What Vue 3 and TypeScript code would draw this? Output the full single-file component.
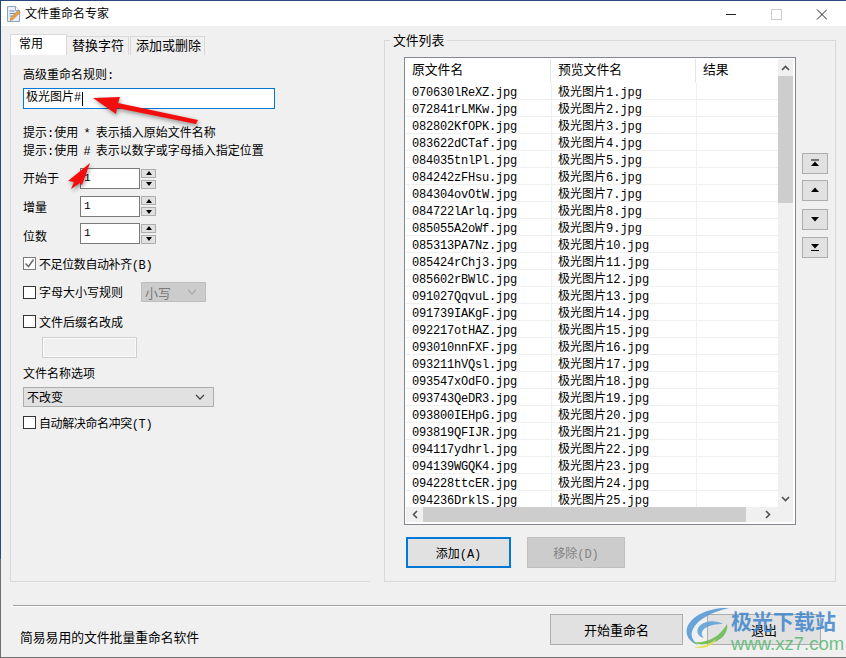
<script setup lang="ts">
const names: string[] = [
  '070630lReXZ', '072841rLMKw', '082802KfOPK', '083622dCTaf', '084035tnlPl',
  '084242zFHsu', '084304ovOtW', '084722lArlq', '085055A2oWf', '085313PA7Nz',
  '085424rChj3', '085602rBWlC', '091027QqvuL', '091739IAKgF', '092217otHAZ',
  '093010nnFXF', '093211hVQsl', '093547xOdFO', '093743QeDR3', '093800IEHpG',
  '093819QFIJR', '094117ydhrl', '094139WGQK4', '094228ttcER', '094236DrklS'
]
const rows = names.map((n, i) => ({ name: `${n}.jpg`, preview: `极光图片${i + 1}.jpg` }))
const spins: string[] = ['开始于', '增量', '位数']
</script>

<template>
  <div class="window">
    <header class="titlebar">
      <svg class="appicon" width="16" height="18" viewBox="0 0 16 18">
        <path d="M1.5 1.5h8l4 4v11h-12z" fill="#e8eef8" stroke="#8ea3c4" />
        <path d="M9.5 1.5v4h4" fill="#fff" stroke="#8ea3c4" />
        <path d="M3.5 6h5M3.5 8.5h8M3.5 11h6" stroke="#6d8cc0" />
        <path d="M4 15.5l1-3 7-7 2 2-7 7z" fill="#e8a33d" stroke="#b8772a" stroke-width=".6" />
      </svg>
      <span class="title">文件重命名专家</span>
      <div class="controls">
        <svg width="120" height="14" viewBox="0 0 120 14">
          <path d="M19 7.5h10" stroke="#222" />
          <rect x="64.5" y="2.5" width="10" height="10" fill="none" stroke="#ccc" />
          <path d="M110 2.5l10 10M120 2.5l-10 10" stroke="#222" />
        </svg>
      </div>
    </header>

    <main class="main">
      <section class="left">
        <div class="tabs">
          <div class="tab active">常用</div>
          <div class="tab">替换字符</div>
          <div class="tab">添加或删除</div>
        </div>
        <div class="pane">
          <div class="label rule-label">高级重命名规则:</div>
          <div class="rule-input">极光图片#<i class="caret"></i></div>
          <div class="hints">
            <div>提示:使用 * 表示插入原始文件名称</div>
            <div>提示:使用 # 表示以数字或字母插入指定位置</div>
          </div>
          <div class="spins">
            <div v-for="s in spins" :key="s" class="spin-row">
              <span class="spin-label">{{ s }}</span>
              <div class="num">1</div>
              <div class="spinner">
                <span class="sbtn"><i class="tri up"></i></span>
                <span class="sbtn"><i class="tri down"></i></span>
              </div>
            </div>
          </div>
          <div class="check first">
            <span class="box checked">
              <svg width="11" height="11" viewBox="0 0 11 11"><path d="M1.5 5.5l3 3 5-7" fill="none" stroke="#6b6b6b" stroke-width="1.5" /></svg>
            </span>
            <span>不足位数自动补齐(B)</span>
          </div>
          <div class="case-row">
            <div class="check">
              <span class="box"></span>
              <span>字母大小写规则</span>
            </div>
            <div class="select disabled">
              <span>小写</span>
              <svg width="10" height="6" viewBox="0 0 10 6"><path d="M1 1l4 4 4-4" fill="none" stroke="#a8a8a8" stroke-width="1.2" /></svg>
            </div>
          </div>
          <div class="check third">
            <span class="box"></span>
            <span>文件后缀名改成</span>
          </div>
          <div class="ext-input"></div>
          <div class="label name-label">文件名称选项</div>
          <div class="select wide">
            <span>不改变</span>
            <svg width="10" height="6" viewBox="0 0 10 6"><path d="M1 1l4 4 4-4" fill="none" stroke="#444" stroke-width="1.3" /></svg>
          </div>
          <div class="check last">
            <span class="box"></span>
            <span>自动解决命名冲突(T)</span>
          </div>
        </div>
      </section>

      <section class="group">
        <div class="legend">文件列表</div>
        <div class="group-body">
          <div class="list-col">
            <div class="list">
              <div class="list-top">
                <div class="table">
                  <div class="thead">
                    <div class="th c1">原文件名</div>
                    <div class="th c2">预览文件名</div>
                    <div class="th c3">结果</div>
                  </div>
                  <div v-for="r in rows" :key="r.name" class="tr">
                    <div class="td d1">{{ r.name }}</div>
                    <div class="td d2">{{ r.preview }}</div>
                    <div class="td d3"></div>
                  </div>
                </div>
                <div class="vscroll">
                  <div class="arrow">
                    <svg width="9" height="6" viewBox="0 0 9 6"><path d="M1 5l3.5-3.5L8 5" fill="none" stroke="#505050" stroke-width="1.6" /></svg>
                  </div>
                  <div class="vthumb"></div>
                  <div class="vfill"></div>
                  <div class="arrow">
                    <svg width="9" height="6" viewBox="0 0 9 6"><path d="M1 1l3.5 3.5L8 1" fill="none" stroke="#505050" stroke-width="1.6" /></svg>
                  </div>
                </div>
              </div>
              <div class="hscroll">
                <div class="harrow">
                  <svg width="6" height="9" viewBox="0 0 6 9"><path d="M5 1L1.5 4.5 5 8" fill="none" stroke="#505050" stroke-width="1.6" /></svg>
                </div>
                <div class="hthumb"></div>
                <div class="harrow right">
                  <svg width="6" height="9" viewBox="0 0 6 9"><path d="M1 1l3.5 3.5L1 8" fill="none" stroke="#505050" stroke-width="1.6" /></svg>
                </div>
              </div>
            </div>
            <div class="list-actions">
              <button class="btn add">添加(A)</button>
              <button class="btn remove">移除(D)</button>
            </div>
          </div>
          <div class="side">
            <div class="sidebtn">
              <svg width="24" height="19" viewBox="0 0 24 19"><path d="M8 6h8" stroke="#000" /><path d="M12 7.5l4 4.5H8z" /></svg>
            </div>
            <div class="sidebtn b2">
              <svg width="24" height="19" viewBox="0 0 24 19"><path d="M12 6.5l4 4.5H8z" /></svg>
            </div>
            <div class="sidebtn b3">
              <svg width="24" height="19" viewBox="0 0 24 19"><path d="M8 7h8l-4 4.5z" /></svg>
            </div>
            <div class="sidebtn b4">
              <svg width="24" height="19" viewBox="0 0 24 19"><path d="M8 6h8l-4 4.5z" /><path d="M8 12.5h8" stroke="#000" /></svg>
            </div>
          </div>
        </div>
      </section>
    </main>

    <div class="sep"></div>
    <footer class="footer">
      <div class="status">简易易用的文件批量重命名软件</div>
      <button class="btn start">开始重命名</button>
      <button class="btn exit">退出</button>
    </footer>

    <svg class="arrows" width="220" height="110" viewBox="0 0 220 110">
      <path d="M93 14l27-1-2 6 80 17-2 4-79-16-1 6z" fill="#f40d0d" />
      <path d="M90 79L68 97l6 1-3 7 9-6 2 2z" fill="#f40d0d" />
    </svg>

    <div class="watermark">
      <svg class="wm-logo" width="46" height="42" viewBox="0 0 46 42">
        <path d="M44 1C26 0 6 8 2 21c-2 8 3 14 11 17-6-5-8-10-5-16C12 13 26 5 44 1z" fill="#4f94d4" opacity=".85" />
        <path d="M38 17c-9-5-21-3-25 4-2 5 1 9 6 10-3-3-3-6 0-9 5-4 12-5 19-5z" fill="#5a9fd8" opacity=".85" />
        <path d="M42 17c2 10-8 19-21 20-5 1-10 0-14-2 9 1 17-1 23-5 5-3 9-8 12-13z" fill="#6dbb57" opacity=".9" />
        <path d="M31 32c-6 5-14 8-22 8 3 1 5 1 8 1 7-1 12-4 14-9z" fill="#e8dd55" opacity=".9" />
      </svg>
      <div class="wm-text">
        <div class="wm-cn">极光下载站</div>
        <div class="wm-en">www.xz7.com</div>
      </div>
    </div>
  </div>
</template>

<style>
html, body { margin: 0; padding: 0; background: #f0f0f0; }
</style>

<style scoped>
.window {
  position: relative;
  width: 846px;
  height: 658px;
  box-sizing: border-box;
  padding-left: 1px;
  border-top: 1px solid #2b4a7a;
  border-bottom: 1px solid #6f6f6f;
  background: linear-gradient(#2b4a7a 0, #2b4a7a 85%, #6f6f6f 85%) left top / 1px 100% no-repeat, #f0f0f0;
  display: flex;
  flex-direction: column;
  font-family: "Liberation Mono", "Noto Sans CJK SC", monospace;
  font-size: 12px;
  color: #000;
  overflow: hidden;
}
.titlebar {
  height: 25px;
  flex: none;
  background: #fff;
  display: flex;
  align-items: center;
  padding-left: 5px;
}
.appicon { flex: none; }
.title { margin: -2px 0 0 3px; font-size: 12px; }
.controls { margin-left: auto; padding-right: 19px; display: flex; }
.main { display: flex; flex: none; height: 556px; }
.left { margin: 8px 0 0 9px; width: 360px; height: 548px; display: flex; flex-direction: column; }
.tabs { display: flex; height: 21px; flex: none; align-items: flex-end; }
.tab {
  box-sizing: border-box;
  height: 19px;
  padding: 0 5px;
  border: 1px solid #d9d9d9;
  border-bottom: 0;
  border-left: 0;
  line-height: 20px;
  font-size: 13px;
  white-space: nowrap;
}
.tab:nth-child(2) { width: 62px; text-align: center; }
.tab:nth-child(3) { width: 75px; margin-left: 1px; border-left: 1px solid #d9d9d9; text-align: center; }
.tab.active {
  width: 57px;
  height: 21px;
  padding-left: 8px;
  background: #fff;
  border-left: 1px solid #d9d9d9;
  line-height: 21px;
  font-size: 12px;
}
.pane {
  flex: 1;
  box-sizing: border-box;
  border-left: 1px solid #d9d9d9;
  border-bottom: 1px solid #d9d9d9;
  padding: 12px 0 0 12px;
  display: flex;
  flex-direction: column;
  align-items: flex-start;
}
.label { height: 16px; line-height: 19px; white-space: nowrap; }
.rule-input {
  box-sizing: border-box;
  width: 252px;
  height: 21px;
  margin-top: 5px;
  padding-left: 2px;
  border: 1px solid #0078d7;
  background: #fff;
  line-height: 19px;
  display: flex;
  align-items: center;
}
.caret { width: 1px; height: 14px; background: #000; margin-left: 1px; }
.hints { margin-top: 16px; line-height: 18px; white-space: pre; word-spacing: -2px; }
.spins { margin-top: 7px; display: flex; flex-direction: column; gap: 6.5px; }
.spin-row { display: flex; align-items: center; height: 21px; }
.spin-label { width: 57px; }
.spin-row:nth-child(1) .spin-label { padding-bottom: 2px; }
.spin-row:nth-child(2) .spin-label { padding-top: 2px; }
.spin-row:nth-child(3) .spin-label { padding-top: 5px; }
.num {
  box-sizing: border-box;
  width: 60px;
  height: 21px;
  border: 1px solid #7a7a7a;
  background: #fff;
  padding-left: 3px;
  line-height: 18px;
  font-size: 11px;
}
.spinner { margin-left: 1px; display: flex; flex-direction: column; gap: 2px; }
.sbtn {
  box-sizing: border-box;
  width: 15px;
  height: 9px;
  background: #e1e1e1;
  border: 1px solid #adadad;
  display: flex;
  align-items: center;
  justify-content: center;
}
.tri { width: 0; height: 0; border-left: 3.5px solid transparent; border-right: 3.5px solid transparent; }
.tri.up { border-bottom: 4px solid #000; }
.tri.down { border-top: 4px solid #000; }
.check { display: flex; align-items: center; height: 13px; gap: 3px; white-space: nowrap; }
.check.first { margin-top: 13px; letter-spacing: -0.4px; }
.check.third { margin-top: 13px; }
.check.last { margin-top: 9px; letter-spacing: -0.4px; }
.box {
  box-sizing: border-box;
  width: 13px;
  height: 13px;
  flex: none;
  background: #fff;
  border: 1px solid #333;
  display: flex;
  align-items: center;
  justify-content: center;
}
.box.checked { border-color: #7a7a7a; }
.case-row { margin-top: 12px; display: flex; align-items: center; height: 20px; }
.case-row .select { margin-left: 18px; }
.select {
  box-sizing: border-box;
  height: 20px;
  display: flex;
  align-items: center;
  justify-content: space-between;
  padding: 0 8px 0 3px;
  background: #e1e1e1;
  border: 1px solid #adadad;
}
.select.disabled { width: 65px; background: #ccc; border-color: #bfbfbf; color: #7a7a7a; font-size: 13px; }
.select.wide { width: 191px; margin-top: 6px; }
.ext-input {
  box-sizing: border-box;
  width: 95px;
  height: 21px;
  margin: 9px 0 0 19px;
  background: #f0f0f0;
  border: 1px solid #cfcfcf;
  box-shadow: inset 0 0 0 1px #fafafa;
}
.name-label { margin-top: 7px; line-height: 20px; }
.group {
  box-sizing: border-box;
  margin: 14px 0 0 14px;
  width: 452px;
  height: 542px;
  border: 1px solid #d9d9d9;
  display: flex;
  flex-direction: column;
  align-items: flex-start;
}
.legend {
  height: 16px;
  margin: -8px 0 0 5px;
  padding: 0 3px;
  line-height: 17px;
  font-size: 12.8px;
  background: #f0f0f0;
}
.group-body { display: flex; margin: 8px 0 0 19px; }
.list-col { width: 392px; }
.list {
  box-sizing: border-box;
  width: 392px;
  height: 468px;
  border: 1px solid #828790;
  padding: 1px;
  background: #fff;
  display: flex;
  flex-direction: column;
}
.list-top { display: flex; height: 448px; flex: none; }
.table { width: 372px; flex: none; overflow: hidden; background: #fff; }
.thead { display: flex; height: 24px; }
.th { box-sizing: border-box; line-height: 24px; font-size: 12.8px; padding-left: 6px; }
.c1, .c2 { width: 145px; border-right: 1px solid #e5e5e5; height: 24px; }
.c2, .c3 { padding-left: 7px; }
.tr { display: flex; height: 17px; box-sizing: border-box; border-bottom: 1px solid #f0f0f0; }
.td { box-sizing: border-box; height: 16px; line-height: 20px; padding-left: 6px; font-size: 12px; white-space: nowrap; }
.d1 { width: 146px; border-right: 1px solid #f0f0f0; letter-spacing: -0.2px; }
.d2 { width: 145px; border-right: 1px solid #f0f0f0; }
.d3 { flex: 1; }
.vscroll { width: 15px; flex: none; background: #f0f0f0; display: flex; flex-direction: column; }
.arrow { height: 17px; flex: none; display: flex; align-items: center; justify-content: center; }
.vthumb { height: 127px; flex: none; background: #cdcdcd; }
.vfill { flex: 1; }
.hscroll { width: 387px; height: 15px; flex: none; background: #f0f0f0; display: flex; align-items: center; }
.harrow { width: 17px; height: 15px; flex: none; display: flex; align-items: center; justify-content: center; }
.harrow.right { width: 32px; justify-content: flex-start; padding-left: 19px; box-sizing: border-box; }
.hthumb { width: 323px; height: 15px; background: #cdcdcd; }
.list-actions { display: flex; gap: 16px; margin: 12px 0 0 2px; }
.btn {
  box-sizing: border-box;
  height: 31px;
  padding: 0;
  background: #e1e1e1;
  border: 1px solid #adadad;
  font: inherit;
  color: #000;
  white-space: nowrap;
}
.add { width: 105px; border: 2px solid #0078d7; }
.remove { width: 98px; background: #ccc; border-color: #bfbfbf; color: #838383; }
.side { width: 26px; margin: 96px 0 0 6px; display: flex; flex-direction: column; }
.sidebtn {
  box-sizing: border-box;
  width: 26px;
  height: 21px;
  background: #e1e1e1;
  border: 1px solid #adadad;
}
.sidebtn svg { display: block; }
.b2 { margin-top: 6px; }
.b3 { margin-top: 8px; }
.b4 { margin-top: 7px; }
.sep { margin: 23px 0 0 12px; height: 1px; flex: none; background: #a0a0a0; border-bottom: 1px solid #fff; }
.footer { display: flex; margin-top: 7px; padding-right: 25px; height: 31px; flex: none; }
.status { flex: 1; padding-left: 19px; align-self: flex-end; line-height: 16px; margin-bottom: -2px; font-size: 12.8px; }
.btn.start { width: 133px; font-size: 13px; }
.btn.exit { width: 114px; margin-left: 24px; font-size: 13px; }
.arrows {
  position: absolute;
  left: 0;
  top: 83px;
  filter: drop-shadow(1px 2px 2px rgba(0, 0, 0, 0.4));
  pointer-events: none;
}
.watermark {
  position: absolute;
  left: 685px;
  top: 606px;
  display: flex;
  pointer-events: none;
}
.wm-cn {
  height: 26px;
  font: bold 21px/26px "Noto Sans CJK SC", sans-serif;
  color: rgba(62, 134, 204, 0.85);
  white-space: nowrap;
}
.wm-en {
  font: 18.5px/22px "Liberation Sans", sans-serif;
  color: rgba(86, 182, 112, 0.85);
  white-space: nowrap;
}
</style>
